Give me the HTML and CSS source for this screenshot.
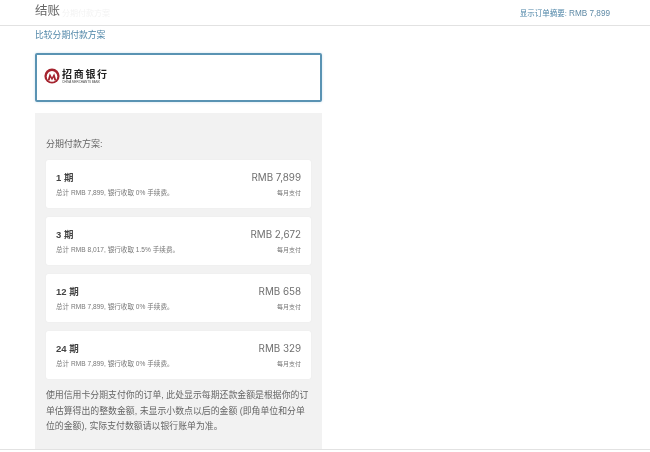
FILE: index.html
```html
<!DOCTYPE html>
<html lang="zh">
<head>
<meta charset="utf-8">
<title>结账</title>
<link rel="stylesheet" href="styles.css">
</head>
<body>
<div class="page">
  <header class="topbar">
    <div class="titles">
      <span class="title">结账</span>
      <span class="ghost">分期付款方案</span>
    </div>
    <a class="summary">显示订单摘要: <span class="summary-price">RMB 7,899</span></a>
  </header>
  <main class="content">
    <a class="compare">比较分期付款方案</a>
    <div class="bank">
      <svg class="bank-mark" viewBox="0 0 16 16" width="16" height="16" aria-hidden="true">
        <circle cx="8" cy="8" r="7.6" fill="#a5242f"/>
        <circle cx="8" cy="8.4" r="5.3" fill="#fff"/>
        <path d="M3.6 12.4 5.8 5.2 8 9.4 10.2 5.2 12.4 12.4H10.4L9.6 9.6 8 12.4 6.4 9.6 5.6 12.4Z" fill="#a5242f"/>
      </svg>
      <div class="bank-text">
        <div class="bank-name">招商银行</div>
        <div class="bank-en">CHINA MERCHANTS BANK</div>
      </div>
    </div>
    <section class="panel">
      <div class="panel-title">分期付款方案:</div>
      <div class="plans">
        <div class="plan">
          <div class="plan-left"><div class="plan-name">1 期</div><div class="plan-note">总计 RMB 7,899, 银行收取 0% 手续费。</div></div>
          <div class="plan-right"><div class="plan-price">RMB 7,899</div><div class="plan-note">每月支付</div></div>
        </div>
        <div class="plan">
          <div class="plan-left"><div class="plan-name">3 期</div><div class="plan-note">总计 RMB 8,017, 银行收取 1.5% 手续费。</div></div>
          <div class="plan-right"><div class="plan-price">RMB 2,672</div><div class="plan-note">每月支付</div></div>
        </div>
        <div class="plan">
          <div class="plan-left"><div class="plan-name">12 期</div><div class="plan-note">总计 RMB 7,899, 银行收取 0% 手续费。</div></div>
          <div class="plan-right"><div class="plan-price">RMB 658</div><div class="plan-note">每月支付</div></div>
        </div>
        <div class="plan">
          <div class="plan-left"><div class="plan-name">24 期</div><div class="plan-note">总计 RMB 7,899, 银行收取 0% 手续费。</div></div>
          <div class="plan-right"><div class="plan-price">RMB 329</div><div class="plan-note">每月支付</div></div>
        </div>
      </div>
      <p class="disclaimer">使用信用卡分期支付你的订单, 此处显示每期还款金额是根据你的订单估算得出的整数金额, 未显示小数点以后的金额 (即角单位和分单位的金额), 实际支付数额请以银行账单为准。</p>
    </section>
  </main>
  <div class="bottomline"></div>
</div>
</body>
</html>
```
FILE: styles.css
```css
* { box-sizing: border-box; }
html, body { margin: 0; padding: 0; background: #fff; }
body {
  width: 650px;
  height: 452px;
  overflow: hidden;
  font-family: "Liberation Sans", "Noto Sans CJK SC", sans-serif;
  color: #333;
}
.page { filter: blur(0.5px); }
.topbar {
  height: 26px;
  border-bottom: 1px solid #e2e2e2;
  padding: 0 40px 0 35px;
  display: flex;
  justify-content: space-between;
  align-items: center;
}
.titles { display: flex; align-items: center; gap: 2px; margin-top: -3px; }
.title { font-size: 12.5px; line-height: 18px; color: #666; }
.ghost { font-size: 8px; color: #f3f3f3; margin-top: 3px; }
.summary { font-size: 7.5px; color: #4f86a8; }
.summary-price { font-size: 8.2px; color: #5f8aa6; }
.content { padding: 3px 0 0 35px; width: 322px; }
.compare { display: block; font-size: 8.8px; line-height: 13px; color: #4f86a8; }
.bank {
  margin-top: 11px;
  height: 49px;
  border: 2px solid #5a93b3;
  border-radius: 2px;
  box-shadow: 0 0 3px #cfe3ef;
  display: flex;
  align-items: center;
  gap: 2px;
  padding: 0 8px 4px 7px;
}
.bank-text { padding-top: 2px; }
.bank-name {
  font-family: "Noto Sans CJK SC", sans-serif;
  font-size: 10px;
  line-height: 10px;
  font-weight: 700;
  letter-spacing: 1.7px;
  color: #222;
}
.bank-en { margin-top: 2px; font-size: 3px; line-height: 3px; color: #444; white-space: nowrap; }
.panel {
  margin-top: 11px;
  height: 336px;
  background: #f2f2f2;
  padding: 25px 11px 0;
}
.panel-title { font-size: 9px; line-height: 13px; color: #666; }
.plans { margin-top: 9px; display: flex; flex-direction: column; gap: 9px; }
.plan {
  height: 48px;
  background: #fff;
  border-radius: 2px;
  box-shadow: 0 0 1px #dcdcdc;
  padding: 11px 10px 0 10px;
  display: flex;
  justify-content: space-between;
}
.plan-name { font-size: 9.5px; line-height: 14px; font-weight: 700; color: #444; }
.plan-price { font-family: "Inter", "Liberation Sans", sans-serif; font-size: 9.8px; line-height: 14px; color: #6f6f6f; text-align: right; }
.plan-note { font-size: 6.6px; line-height: 10px; margin-top: 3px; color: #777; }
.plan-right .plan-note { font-size: 6px; text-align: right; }
.disclaimer {
  margin: 9px 0 0;
  font-size: 8.9px;
  line-height: 15.5px;
  color: #666;
}
.bottomline { border-top: 1px solid #e2e2e2; }
```
